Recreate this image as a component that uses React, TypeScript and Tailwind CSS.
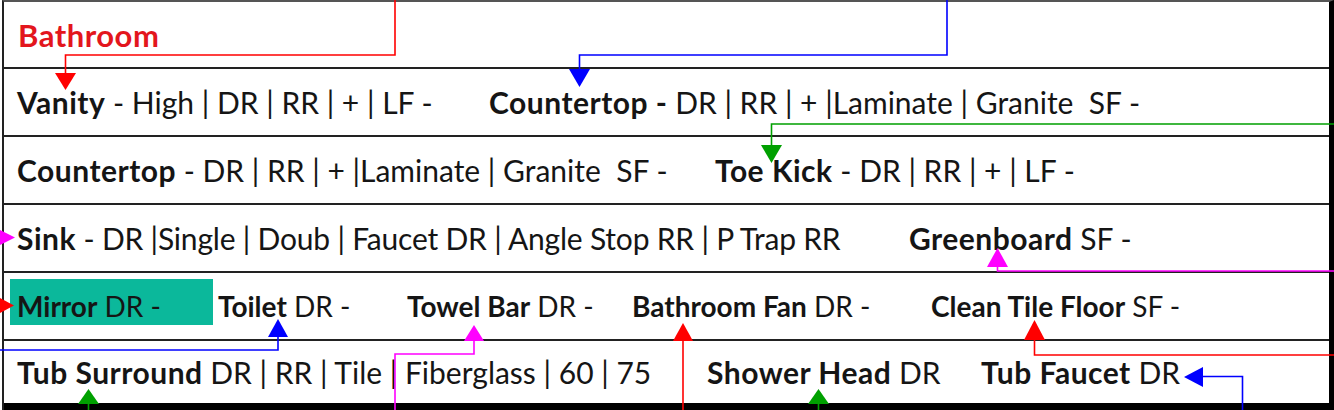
import React from "react";

type Seg = { b: string; r?: string; w?: string; rc?: string };

function Item({ b, r, tight, rc }: { b: string; r?: string; tight?: boolean; rc?: string }) {
  return (
    <span className="whitespace-pre">
      <span className={tight ? "font-bold" : "font-bold tracking-[0.5px]"}>{b}</span>
      <span className={rc}>{r}</span>
    </span>
  );
}

function Row({ segs, last }: { segs: Seg[]; last?: boolean }) {
  return (
    <div
      className={
        "flex items-center pl-[13px] " +
        (last ? "h-[69px] border-b-[7px] border-black" : "h-[68px] border-b-2 border-[#222]")
      }
    >
      {segs.map((s, i) => (
        <div key={i} className={s.w ? s.w + " shrink-0" : "shrink-0"}>
          <Item b={s.b} r={s.r} rc={s.rc} />
        </div>
      ))}
    </div>
  );
}

function Arrows() {
  return (
    <svg className="absolute inset-0 pointer-events-none" width="1334" height="410" viewBox="0 0 1334 410">
      <g fill="none" strokeWidth="1.6">
        <polyline points="395,0 395,55 65.5,55 65.5,75" stroke="#ff0000" />
        <polyline points="947,0 947,55 579.5,55 579.5,72" stroke="#0000ff" />
        <polyline points="1334,124 771.5,124 771.5,148" stroke="#00a000" />
        <polyline points="1334,271 997.5,271 997.5,264" stroke="#ff00ff" />
        <polyline points="395,410 395,354 474,354 474,338" stroke="#ff00ff" />
        <polyline points="0,350 278,350 278,334" stroke="#0000ff" />
        <polyline points="683,410 683,338" stroke="#ff0000" />
        <polyline points="1334,355 1034.5,355 1034.5,337" stroke="#ff0000" />
        <polyline points="1242.5,410 1242.5,376.5 1200,376.5" stroke="#0000ff" />
        <polyline points="88.5,410 88.5,402" stroke="#00a000" />
        <polyline points="818.5,410 818.5,402" stroke="#00a000" />
      </g>
      <polygon points="55,73 76,73 65.5,90" fill="#ff0000" />
      <polygon points="569,69 590,69 579.5,87" fill="#0000ff" />
      <polygon points="761,145 782,145 771.5,163" fill="#00a000" />
      <polygon points="0,230 15,237.5 0,245" fill="#ff00ff" />
      <polygon points="987,267 1008,267 997.5,248" fill="#ff00ff" />
      <polygon points="464,341 484,341 474,325" fill="#ff00ff" />
      <polygon points="268,337 288,337 278,319" fill="#0000ff" />
      <polygon points="0,298 14,305.5 0,313" fill="#ff0000" />
      <polygon points="673,341 693,341 683,323" fill="#ff0000" />
      <polygon points="1024,340 1045,340 1034.5,320" fill="#ff0000" />
      <polygon points="1203,367 1203,387 1184,377" fill="#0000ff" />
      <polygon points="78,404 99,404 88.5,389" fill="#00a000" />
      <polygon points="808,404 829,404 818.5,389" fill="#00a000" />
    </svg>
  );
}

export default function App() {
  return (
    <div className="relative w-[1334px] h-[410px] bg-white overflow-hidden font-['Lato',sans-serif] text-[30px] leading-[36px] text-[#151515]">
      <div className="ml-[2px] w-[1332px] border-l-2 border-r-[5px] border-t-2 border-l-[#222] border-r-black border-t-[#555]">
        <div className="flex items-center h-[67px] pl-[14px] border-b-2 border-[#222]">
          <span className="font-bold tracking-[0.5px] text-[31px] text-[#e3161d]">Bathroom</span>
        </div>
        <Row
          segs={[
            { b: "Vanity", r: " - High | DR | RR | + | LF -", w: "w-[472px]" },
            { b: "Countertop -", r: " DR | RR | + |Laminate | Granite  SF -" },
          ]}
        />
        <Row
          segs={[
            { b: "Countertop", r: " - DR | RR | + |Laminate | Granite  SF -", w: "w-[698px]" },
            { b: "Toe Kick", r: " - DR | RR | + | LF -" },
          ]}
        />
        <Row
          segs={[
            {
              b: "Sink",
              r: " - DR |Single | Doub | Faucet DR | Angle Stop RR | P Trap RR",
              w: "w-[892px]",
              rc: "tracking-[-0.2px]",
            },
            { b: "Greenboard", r: " SF -" },
          ]}
        />
        <div className="flex items-start h-[68px] border-b-2 border-[#222] text-[28px]">
          <div className="ml-[6px] mt-[6px] w-[203px] h-[46px] bg-[#0bb89b] pl-[7px] pt-[9px] shrink-0">
            <Item tight b="Mirror" r=" DR -" />
          </div>
          <div className="ml-[5px] mt-[15px] w-[189px] shrink-0">
            <Item tight b="Toilet" r=" DR -" />
          </div>
          <div className="mt-[15px] w-[225px] shrink-0">
            <Item tight b="Towel Bar" r=" DR -" />
          </div>
          <div className="mt-[15px] w-[299px] shrink-0">
            <Item tight b="Bathroom Fan" r=" DR -" />
          </div>
          <div className="mt-[15px] shrink-0">
            <Item tight b="Clean Tile Floor" r=" SF -" />
          </div>
        </div>
        <Row
          last
          segs={[
            { b: "Tub Surround", r: " DR | RR | Tile | Fiberglass | 60 | 75", w: "w-[690px]" },
            { b: "Shower Head", r: " DR", w: "w-[274px]" },
            { b: "Tub Faucet", r: " DR" },
          ]}
        />
      </div>
      <Arrows />
    </div>
  );
}
